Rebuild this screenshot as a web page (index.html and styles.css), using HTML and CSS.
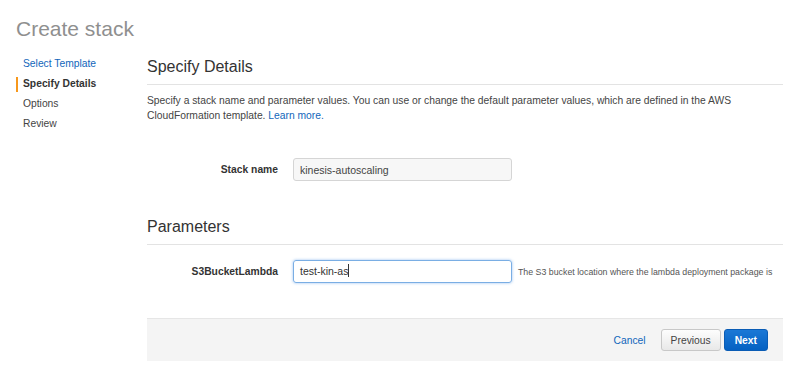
FILE: index.html
```html
<!DOCTYPE html>
<html lang="en">

<head>
    <meta charset="UTF-8">
    <meta name="viewport" content="width=device-width, initial-scale=1.0">
    <title>Create stack</title>
    <link rel="stylesheet" href="styles.css">
</head>

<body>
    <div class="page">
        <h1 class="title">Create stack</h1>
        <div class="layout">
            <ul class="steps">
                <li><a href="#">Select Template</a></li>
                <li class="active">Specify Details</li>
                <li>Options</li>
                <li>Review</li>
            </ul>

            <div class="content">
                <h2 class="section_title">Specify Details</h2>
                <p class="intro">Specify a stack name and parameter values. You can use or change the default parameter values, which are defined in the AWS CloudFormation template. <a href="#">Learn more.</a></p>

                <div class="form_row stack_row">
                    <label for="stackName">Stack name</label>
                    <input type="text" id="stackName" class="field disabled" value="kinesis-autoscaling">
                </div>

                <h2 class="section_title">Parameters</h2>

                <div class="form_row param_row">
                    <label>S3BucketLambda</label>
                    <div class="field focused">test-kin-as<span class="caret"></span></div>
                    <span class="help">The S3 bucket location where the lambda deployment package is</span>
                </div>

                <div class="footer">
                    <a href="#" class="cancel">Cancel</a>
                    <button class="btn">Previous</button>
                    <button class="btn primary">Next</button>
                </div>
            </div>
        </div>
    </div>
</body>

</html>
```

FILE: styles.css
```css
body {
    margin: 0;
    background-color: #fff;
    font-family: "Liberation Sans", Arial, sans-serif;
    color: #444;
}

a {
    color: #1166bb;
    text-decoration: none;
}

.page {
    padding: 17px 17px 0 16px;
}

.title {
    margin: 0;
    font-size: 21px;
    line-height: 24px;
    font-weight: normal;
    color: #8f8f8f;
}

.layout {
    display: flex;
    margin-top: 13px;
}

/* left wizard steps */
.steps {
    list-style: none;
    margin: 0;
    padding: 0;
    width: 131px;
    flex-shrink: 0;
}

.steps li {
    font-size: 10.3px;
    line-height: 20px;
    color: #444;
    padding-left: 7px;
    position: relative;
}

.steps li.active {
    font-weight: bold;
    color: #333;
}

.steps li.active::before {
    content: "";
    position: absolute;
    left: 0;
    top: 3px;
    width: 2px;
    height: 15px;
    background-color: #f7981c;
}

.content {
    flex: 1;
    padding-top: 3px;
}

.section_title {
    margin: 0;
    padding-bottom: 7px;
    border-bottom: 1px solid #e3e3e3;
    font-size: 16px;
    line-height: 20px;
    font-weight: normal;
    color: #333;
}

.intro {
    margin: 8px 0 0;
    font-size: 10.3px;
    line-height: 15px;
    color: #444;
}

.form_row {
    display: flex;
    align-items: center;
}

.form_row label {
    width: 131px;
    text-align: right;
    font-size: 10.3px;
    font-weight: bold;
    color: #333;
    margin-right: 15px;
}

.stack_row {
    margin-top: 35px;
    margin-bottom: 36px;
}

.param_row {
    margin-top: 15px;
}

.field {
    box-sizing: border-box;
    width: 219px;
    height: 23px;
    padding: 0 6px;
    border: 1px solid #d5d5d5;
    border-radius: 3px;
    font-family: inherit;
    font-size: 10.5px;
    line-height: 21px;
    color: #444;
    margin: 0;
}

.field.disabled {
    background-color: #f7f7f7;
}

.field.focused {
    border-color: #7aaee4;
    box-shadow: 0 0 3px rgba(82, 150, 230, 0.6);
    color: #333;
}

.caret {
    display: inline-block;
    width: 1px;
    height: 13px;
    background-color: #333;
    vertical-align: -2px;
}

.help {
    margin-left: 6px;
    font-size: 8.8px;
    color: #555;
}

.footer {
    display: flex;
    justify-content: flex-end;
    align-items: center;
    margin-top: 35px;
    height: 43px;
    padding-right: 15px;
    background-color: #f4f4f4;
    border-top: 1px solid #e6e6e6;
    box-sizing: border-box;
}

.cancel {
    font-size: 10.3px;
    margin-right: 15px;
}

.btn {
    height: 22px;
    padding: 0 9px;
    border: 1px solid #c8c8c8;
    border-radius: 3px;
    background: linear-gradient(#fdfdfd, #e8e8e8);
    font-family: inherit;
    font-size: 10.3px;
    color: #444;
}

.btn.primary {
    margin-left: 3px;
    padding: 0 10px;
    border-color: #0a5cb5;
    background: linear-gradient(#1b78d6, #0561c2);
    color: #fff;
    font-weight: bold;
}
```
